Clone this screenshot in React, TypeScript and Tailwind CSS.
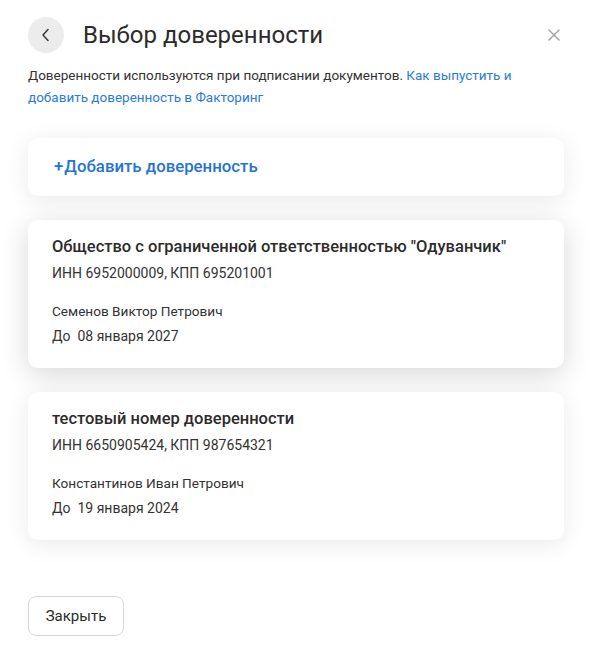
import React from "react";

interface Proxy {
  title: string;
  inn: string;
  kpp: string;
  person: string;
  until: string;
}

const proxies: Proxy[] = [
  {
    title: 'Общество с ограниченной ответственностью "Одуванчик"',
    inn: "6952000009",
    kpp: "695201001",
    person: "Семенов Виктор Петрович",
    until: "08 января 2027",
  },
  {
    title: "тестовый номер доверенности",
    inn: "6650905424",
    kpp: "987654321",
    person: "Константинов Иван Петрович",
    until: "19 января 2024",
  },
];

const ProxyCard = ({ proxy, active }: { proxy: Proxy; active?: boolean }) => (
  <div
    className={`rounded-[10px] bg-white px-6 pt-[16px] pb-[22px] ${
      active
        ? "shadow-[0_6px_28px_rgba(0,0,0,0.16)]"
        : "shadow-[0_4px_24px_rgba(0,0,0,0.09)]"
    }`}
  >
    <div className="text-[16.5px] font-medium leading-[22px] text-[#2b2b2b]">
      {proxy.title}
    </div>
    <div className="mt-[4px] text-[14px] leading-[22px] text-[#333]">
      ИНН {proxy.inn}, КПП {proxy.kpp}
    </div>
    <div className="mt-[17px] text-[13.6px] leading-[20px] text-[#333]">
      {proxy.person}
    </div>
    <div className="mt-[5px] text-[14px] leading-[20px] text-[#333]">
      До&nbsp; {proxy.until}
    </div>
  </div>
);

export default function App() {
  return (
    <div className="min-h-screen bg-white font-['Roboto',sans-serif] text-[#2b2b2b]">
      <div className="pl-[28px] pr-[26px] pt-[17px] pb-[13px]">
        {/* Header */}
        <div className="flex items-center">
          <button className="flex h-9 w-9 items-center justify-center rounded-full bg-[#ececec]">
            <svg width="16" height="16" viewBox="0 0 16 16" fill="none">
              <path
                d="M10 2.5L5 8l5 5.5"
                stroke="#3a3a3a"
                strokeWidth="1.5"
                strokeLinecap="round"
                strokeLinejoin="round"
              />
            </svg>
          </button>
          <h1 className="ml-[19px] text-[24px] font-normal leading-9 text-[#2b2b2b]">
            Выбор доверенности
          </h1>
          <button className="ml-auto mr-[-2px] flex h-6 w-6 items-center justify-center">
            <svg width="12" height="12" viewBox="0 0 12 12" fill="none">
              <path
                d="M1 1l10 10M11 1L1 11"
                stroke="#a0a0a0"
                strokeWidth="1.4"
                strokeLinecap="round"
              />
            </svg>
          </button>
        </div>

        <p className="mt-[11px] text-[13.5px] leading-[22px] text-[#333]">
          Доверенности используются при подписании документов.{" "}
          <a className="text-[#2b7bd8]" href="#">
            Как выпустить и
          </a>
          <br />
          <a className="text-[#2b7bd8]" href="#">
            добавить доверенность в Факторинг
          </a>
        </p>

        {/* Cards */}
        <div className="mt-[30px] flex flex-col gap-[24px]">
          <div className="flex h-[58px] items-center rounded-[10px] bg-white px-[26px] shadow-[0_4px_24px_rgba(0,0,0,0.09)]">
            <span className="text-[16.8px] font-medium text-[#2474d4]">
              +<span className="ml-[1px]">Добавить доверенность</span>
            </span>
          </div>
          <ProxyCard proxy={proxies[0]} active />
          <ProxyCard proxy={proxies[1]} />
        </div>

        <button className="mt-[56px] h-10 w-24 rounded-lg border border-[#d6d6d6] bg-white text-[15px] text-[#2b2b2b]">
          Закрыть
        </button>
      </div>
    </div>
  );
}
